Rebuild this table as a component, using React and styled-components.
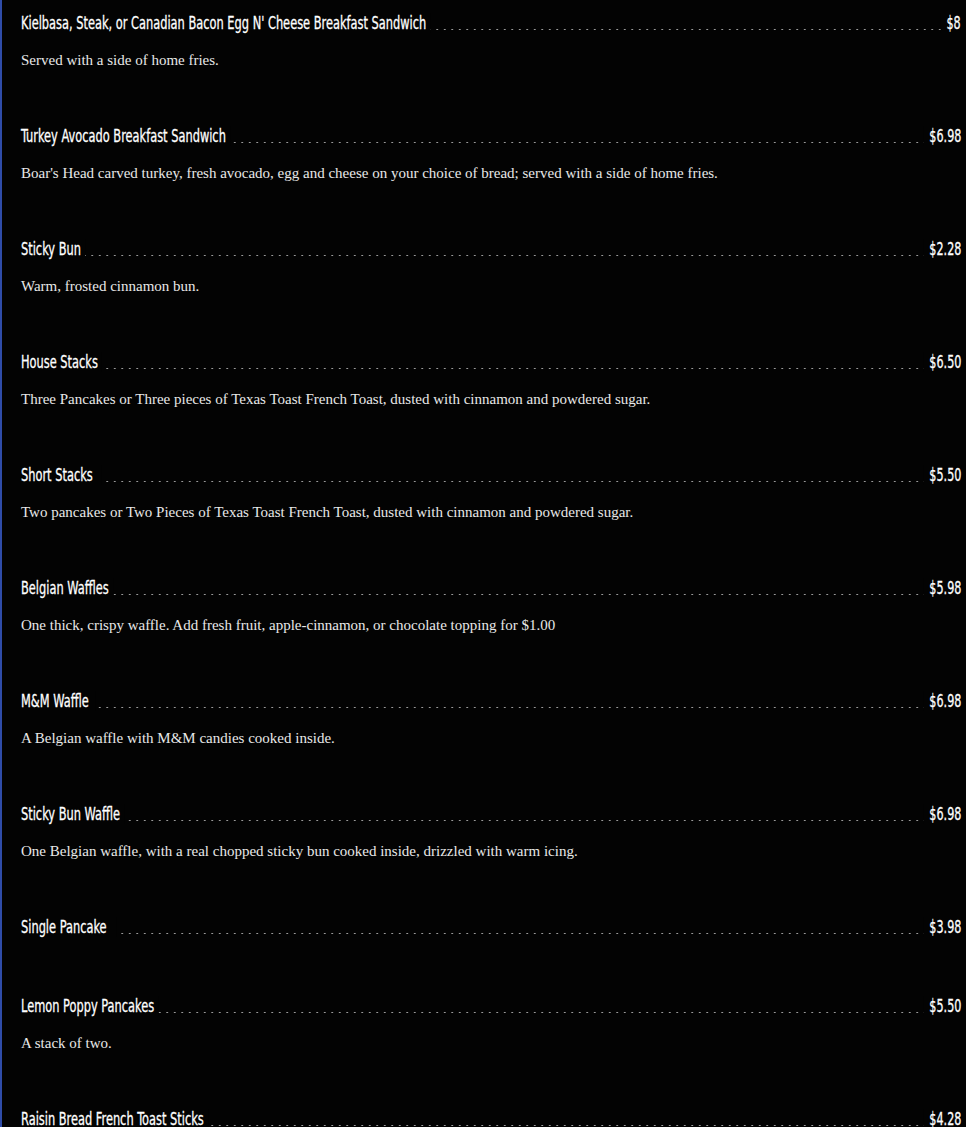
import React from 'react';
import styled, { createGlobalStyle } from 'styled-components';

const GlobalStyle = createGlobalStyle`
    html, body {
        margin: 0;
        padding: 0;
        background: #030303;
    }
`

const Menu = styled.div`
    height: 1127px;
    overflow: hidden;
    box-sizing: border-box;
    border-left: 2px solid #2f4ca8;
    padding: 13px 5px 0 19px;
    background: #030303;
`

const Item = styled.div`
    margin-bottom: ${p => p.plain ? 59 : 57}px;
`

// dotted leader runs under the whole row, name and price cover it
const Row = styled.div`
    display: flex;
    justify-content: space-between;
    height: 20px;
    line-height: 20px;
    margin-bottom: 5px;
    font-family: "DejaVu Sans Condensed", "DejaVu Sans", sans-serif;
    font-weight: normal;
    font-size: 18px;
    color: #fff;
    -webkit-text-stroke: 0.3px #fff;
    background-image: radial-gradient(circle, #9a9a9a 0.7px, transparent 1.1px);
    background-size: 7.5px 3px;
    background-repeat: repeat-x;
    background-position: left 15px;
`

const Name = styled.span`
    display: inline-block;
    white-space: nowrap;
    background: #030303;
    padding-right: ${p => p.gap || 6}px;
    transform: scaleX(0.704);
    transform-origin: left center;
`

const Price = styled.span`
    display: inline-block;
    white-space: nowrap;
    background: #030303;
    padding-left: 8px;
    transform: scaleX(0.69);
    transform-origin: right center;
`

const Desc = styled.p`
    margin: 18px 0 0;
    font-family: "Liberation Serif", "Times New Roman", serif;
    font-size: 15px;
    line-height: 18px;
    color: #e8e8e8;
`

const items = [
  { name: "Kielbasa, Steak, or Canadian Bacon Egg N' Cheese Breakfast Sandwich", price: '$8', desc: 'Served with a side of home fries.' },
  { name: 'Turkey Avocado Breakfast Sandwich', price: '$6.98', desc: "Boar's Head carved turkey, fresh avocado, egg and cheese on your choice of bread; served with a side of home fries." },
  { name: 'Sticky Bun', price: '$2.28', desc: 'Warm, frosted cinnamon bun.' },
  { name: 'House Stacks', price: '$6.50', desc: 'Three Pancakes or Three pieces of Texas Toast French Toast, dusted with cinnamon and powdered sugar.' },
  { name: 'Short Stacks', price: '$5.50', desc: 'Two pancakes or Two Pieces of Texas Toast French Toast, dusted with cinnamon and powdered sugar.', gap: 12 },
  { name: 'Belgian Waffles', price: '$5.98', desc: 'One thick, crispy waffle. Add fresh fruit, apple-cinnamon, or chocolate topping for $1.00' },
  { name: 'M&M Waffle', price: '$6.98', desc: 'A Belgian waffle with M&M candies cooked inside.', gap: 10 },
  { name: 'Sticky Bun Waffle', price: '$6.98', desc: 'One Belgian waffle, with a real chopped sticky bun cooked inside, drizzled with warm icing.' },
  { name: 'Single Pancake', price: '$3.98', gap: 14 },
  { name: 'Lemon Poppy Pancakes', price: '$5.50', desc: 'A stack of two.' },
  { name: 'Raisin Bread French Toast Sticks', price: '$4.28', desc: '' },
];

export default function App() {
  return (
    <>
      <GlobalStyle />
      <Menu>
        {items.map(item => (
          <Item key={item.name} plain={!item.desc}>
            <Row>
              <Name gap={item.gap}>{item.name}</Name>
              <Price>{item.price}</Price>
            </Row>
            {item.desc && <Desc>{item.desc}</Desc>}
          </Item>
        ))}
      </Menu>
    </>
  );
}
